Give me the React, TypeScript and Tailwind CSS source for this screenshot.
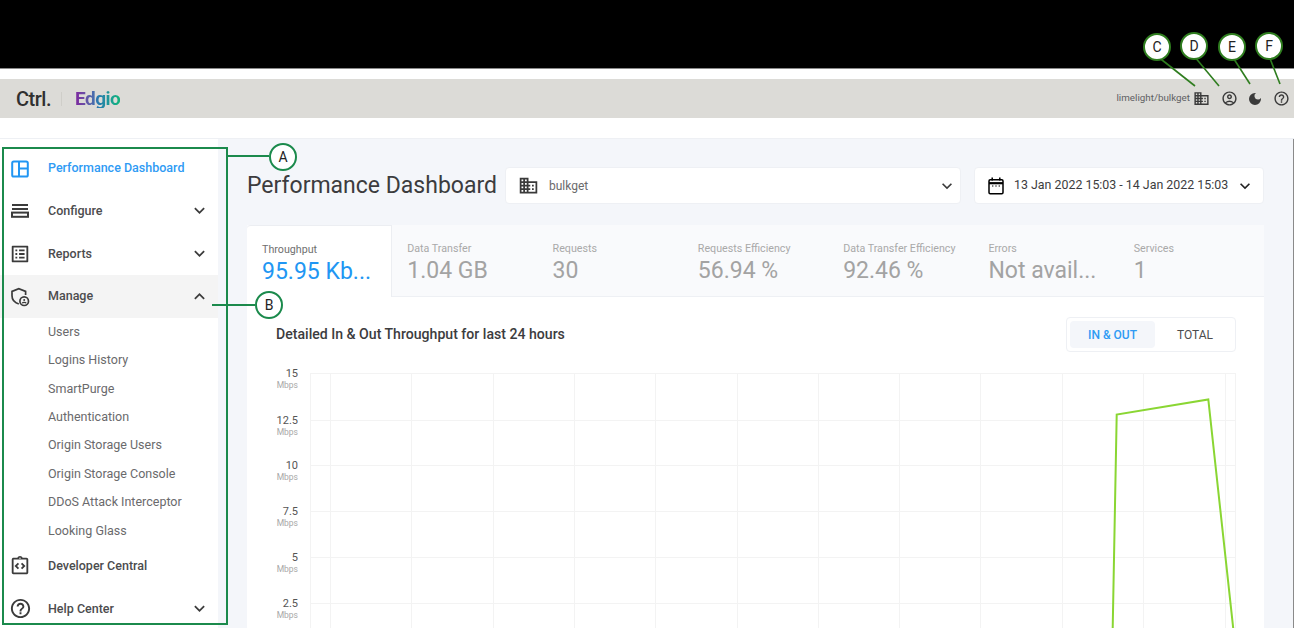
import { FC, ReactNode } from "react";
import {
  MdDomain,
  MdDarkMode,
  MdExpandLess,
  MdExpandMore,
  MdOutlineAccountCircle,
  MdOutlineHelpOutline,
  MdOutlineIntegrationInstructions,
  MdOutlineListAlt,
} from "react-icons/md";

type NavRowProps = {
  icon: ReactNode;
  label: string;
  active?: boolean;
  open?: boolean;
  hasChevron?: boolean;
};

type StatTabProps = {
  label: string;
  value: string;
  active?: boolean;
};

type BadgeProps = {
  letter: string;
  className: string;
};

const subItems = [
  "Users",
  "Logins History",
  "SmartPurge",
  "Authentication",
  "Origin Storage Users",
  "Origin Storage Console",
  "DDoS Attack Interceptor",
  "Looking Glass",
];

const stats = [
  { label: "Throughput", value: "95.95 Kb...", active: true },
  { label: "Data Transfer", value: "1.04 GB" },
  { label: "Requests", value: "30" },
  { label: "Requests Efficiency", value: "56.94 %" },
  { label: "Data Transfer Efficiency", value: "92.46 %" },
  { label: "Errors", value: "Not avail..." },
  { label: "Services", value: "1" },
];

const yTicks = [
  { y: 373, label: "15" },
  { y: 420, label: "12.5" },
  { y: 465, label: "10" },
  { y: 511, label: "7.5" },
  { y: 557, label: "5" },
  { y: 603, label: "2.5" },
];

const xTicks = [330.5, 411.5, 493.5, 574.5, 655.5, 737.5, 818.5, 899.5, 980.5, 1062.5, 1143.5, 1225.5];

const DashboardIcon = () => (
  <svg width="18" height="18" viewBox="0 0 18 18" fill="none" stroke="currentColor" strokeWidth="2" className="shrink-0">
    <rect x="1.2" y="1.4" width="15.6" height="15.2" rx="1.6" />
    <path d="M8 1.4v15.2M8 8.4h8.8" />
  </svg>
);

const ConfigureIcon = () => (
  <svg width="18" height="14" viewBox="0 0 18 14" fill="none" stroke="currentColor" strokeWidth="2" className="shrink-0">
    <path d="M1 1h16M1 5h16" />
    <rect x="1" y="8.6" width="16" height="4.2" />
  </svg>
);

const ManageIcon = () => (
  <svg width="20" height="20" viewBox="0 0 20 20" fill="none" stroke="currentColor" strokeWidth="1.7" className="shrink-0">
    <path d="M15.6 8V4.4L8.8 1.6 2 4.4v4.4c0 4 2.8 7 6.8 8.2" />
    <circle cx="14.2" cy="14.2" r="4.3" />
    <circle cx="14.2" cy="13" r="1" fill="currentColor" stroke="none" />
    <path d="M12.2 16.2c.6-1.2 3.4-1.2 4 0" strokeWidth="1.2" />
  </svg>
);

const CalendarIcon = () => (
  <svg width="16" height="18" viewBox="0 0 16 18" fill="none" stroke="currentColor" strokeWidth="1.5" className="shrink-0">
    <rect x="1" y="2.8" width="14" height="14" rx="1.2" />
    <path d="M4.2 0.6v3M11.8 0.6v3" />
    <path d="M1 6.2h14" strokeWidth="2.2" />
    <path d="M4 9h1.4M7.3 9h1.4M10.6 9H12" strokeWidth="1" />
  </svg>
);

const NavRow: FC<NavRowProps> = ({ icon, label, active, open, hasChevron }) => (
  <div
    className={`flex h-[43px] items-center pl-[11px] pr-[8px] ${open ? "bg-[#f4f4f4]" : ""} ${active ? "pt-[2px]" : ""}`}
  >
    <span
      className={`flex w-[18px] justify-center ${active ? "text-[#2196f3]" : "text-[#3b3b3b]"}`}
    >
      {icon}
    </span>
    <span
      className={`ml-[19px] flex-1 text-[12.5px] font-medium ${active ? "text-[#2f9bf4]" : "text-[#4c4c4e]"} ${active || open ? "" : "pt-[2px]"}`}
    >
      {label}
    </span>
    {hasChevron &&
      (open ? (
        <MdExpandLess className="shrink-0 text-[21px] text-[#3b3b3b]" />
      ) : (
        <MdExpandMore className="shrink-0 text-[21px] text-[#3b3b3b]" />
      ))}
  </div>
);

const StatTab: FC<StatTabProps> = ({ label, value, active }) => (
  <div
    className={`h-[72px] w-[145.3px] pl-[15px] pt-[17px] ${
      active
        ? "rounded-tl-sm border-r border-t border-[#eceef2] bg-white"
        : "border-b border-[#eef0f4]"
    }`}
  >
    <p className={`text-[10.7px] leading-[13px] ${active ? "text-[#6f6f6f]" : "text-[#a9a9a9]"}`}>{label}</p>
    <p
      className={`mt-[1px] text-[23px] leading-[29px] ${active ? "text-[#2196f3]" : "text-[#a3a3a3]"}`}
    >
      {value}
    </p>
  </div>
);

const Badge: FC<BadgeProps> = ({ letter, className }) => (
  <div
    className={`absolute flex h-[28px] w-[28px] items-center justify-center rounded-full border-2 border-[#1b8a4c] bg-white text-[14px] text-[#222] ${className}`}
  >
    {letter}
  </div>
);

const Chart: FC = () => (
  <svg width="1000" height="270" viewBox="247 358 1000 270" className="block">
    {yTicks.map((tick) => (
      <g key={tick.label}>
        <line x1="310" x2="1236" y1={tick.y + 0.5} y2={tick.y + 0.5} stroke="#f3f3f3" />
        <text x="298" y={tick.y + 4} textAnchor="end" fontSize="11" fill="#555">
          {tick.label}
        </text>
        <text x="298" y={tick.y + 15} textAnchor="end" fontSize="8.5" fill="#a8a8a8">
          Mbps
        </text>
      </g>
    ))}
    <line x1="310.5" x2="310.5" y1="373" y2="628" stroke="#f3f3f3" />
    <line x1="1235.5" x2="1235.5" y1="373" y2="628" stroke="#f3f3f3" />
    {xTicks.map((x) => (
      <line key={x} x1={x} x2={x} y1="373" y2="628" stroke="#f3f3f3" />
    ))}
    <polyline
      points="1112.7,628 1116.7,414.5 1208.3,399.5 1233.2,628"
      fill="none"
      stroke="#8ad633"
      strokeWidth="2"
    />
  </svg>
);

export default function App() {
  return (
    <div className="relative h-[628px] w-[1294px] overflow-hidden bg-white font-['Roboto',sans-serif]">
      <div className="h-[69px] border-b border-[#8a8a8a] bg-black" />

      <div className="h-[10px]" />

      {/* Top bar */}
      <header className="flex h-[39px] items-center bg-[#dcdbd7] pl-[16px] pr-[4px]">
        <span className="text-[20px] font-medium leading-none tracking-[-0.5px] text-[#303030]">Ctrl.</span>
        <span className="ml-[10px] h-[14px] w-px bg-[#cfcec9]" />
        <span className="ml-[13px] bg-gradient-to-r from-[#7d1f9e] via-[#2b78b0] to-[#10b57a] bg-clip-text text-[19px] font-bold leading-none tracking-[-0.5px] text-transparent">
          Edgio
        </span>
        <div className="ml-auto flex items-center text-[#3a3a3a]">
          <span className="text-[9.8px] text-[#5f5f63]">limelight/bulkget</span>
          <MdDomain className="ml-[3px] shrink-0 text-[17px]" />
          <MdOutlineAccountCircle className="ml-[11px] shrink-0 text-[17px]" />
          <MdDarkMode className="ml-[9px] shrink-0 text-[16px]" />
          <MdOutlineHelpOutline className="ml-[10px] shrink-0 text-[17px]" />
        </div>
      </header>

      <div className="h-[21px] border-b border-[#eef0f4]" />

      <div className="flex h-[489px] border-r border-[#8a8a8a]">
        {/* Sidebar */}
        <aside className="w-[218px] shrink-0 bg-white pt-[7px]">
          <NavRow icon={<DashboardIcon />} label="Performance Dashboard" active />
          <NavRow icon={<ConfigureIcon />} label="Configure" hasChevron />
          <NavRow icon={<MdOutlineListAlt className="shrink-0 text-[22px]" />} label="Reports" hasChevron />
          <NavRow icon={<ManageIcon />} label="Manage" open hasChevron />
          <ul className="mb-[-1px]">
            {subItems.map((item) => (
              <li key={item} className="flex h-[28.4px] items-center pl-[48px] text-[12.5px] text-[#6a6a6c]">
                {item}
              </li>
            ))}
          </ul>
          <NavRow
            icon={<MdOutlineIntegrationInstructions className="shrink-0 text-[22px]" />}
            label="Developer Central"
          />
          <NavRow icon={<MdOutlineHelpOutline className="shrink-0 text-[23px]" />} label="Help Center" hasChevron />
        </aside>

        {/* Main */}
        <main className="min-w-0 flex-1 bg-[#f4f6fa] pl-[29px] pr-[29px]">
          <div className="flex h-[86px] items-start pt-[28px]">
            <h1 className="w-[258px] shrink-0 whitespace-nowrap pt-[3px] text-[23px] leading-[32px] text-[#3c3c3e]">
              Performance Dashboard
            </h1>
            <div className="flex h-[37px] w-[456px] items-center rounded border border-[#eef0f4] bg-white pl-[12px] pr-[3px]">
              <MdDomain className="shrink-0 text-[21px] text-[#3a3a3a]" />
              <span className="ml-[10px] flex-1 text-[12px] text-[#6a6a6c]">bulkget</span>
              <MdExpandMore className="shrink-0 text-[20px] text-[#3a3a3a]" />
            </div>
            <div className="ml-[13px] flex h-[37px] w-[290px] items-center rounded border border-[#eef0f4] bg-white pl-[13px] pr-[8px]">
              <CalendarIcon />
              <span className="ml-[10px] flex-1 whitespace-nowrap text-[12.4px] text-[#3c3c3e]">
                13 Jan 2022 15:03 - 14 Jan 2022 15:03
              </span>
              <MdExpandMore className="shrink-0 text-[20px] text-[#222]" />
            </div>
          </div>

          {/* Stat tabs */}
          <div className="flex h-[72px] items-start bg-[#f9fafc]">
            {stats.map((stat) => (
              <StatTab key={stat.label} {...stat} />
            ))}
          </div>

          {/* Chart card */}
          <section className="h-[331px] bg-white">
            <div className="flex h-[61px] items-start pl-[29px] pr-[28px] pt-[20px]">
              <h2 className="flex-1 pt-[7px] text-[14.1px] font-medium leading-[20px] text-[#3c3c3e]">
                Detailed In &amp; Out Throughput for last 24 hours
              </h2>
              <div className="flex h-[35px] w-[170px] items-center rounded-sm border border-[#eef0f4] pl-[3px] text-[12px] font-medium">
                <span className="flex h-[27px] w-[85px] items-center justify-center rounded-sm bg-[#f4f6fa] text-[#2f9bf4]">
                  IN &amp; OUT
                </span>
                <span className="flex-1 text-center font-normal text-[#4c4c4e]">TOTAL</span>
              </div>
            </div>
            <Chart />
          </section>
        </main>
      </div>

      {/* Annotation callouts */}
      <div className="pointer-events-none absolute left-[2px] top-[147px] h-[478px] w-[226px] border-2 border-[#1b8a4c]" />
      <div className="absolute left-[228px] top-[155px] h-[2px] w-[41px] bg-[#1b8a4c]" />
      <Badge letter="A" className="left-[269px] top-[143px]" />
      <div className="absolute left-[212px] top-[304px] h-[2px] w-[43px] bg-[#1b8a4c]" />
      <Badge letter="B" className="left-[255px] top-[291px]" />

      <svg width="1294" height="100" className="absolute left-0 top-0">
        <line x1="1157" y1="56" x2="1195" y2="86" stroke="#2f7d1f" strokeWidth="1.6" />
        <line x1="1194" y1="56" x2="1219" y2="86" stroke="#2f7d1f" strokeWidth="1.6" />
        <line x1="1232" y1="56" x2="1250" y2="84" stroke="#2f7d1f" strokeWidth="1.6" />
        <line x1="1269" y1="56" x2="1280" y2="84" stroke="#2f7d1f" strokeWidth="1.6" />
      </svg>
      <Badge letter="C" className="left-[1143px] top-[33px] border-[#2f7d1f]" />
      <Badge letter="D" className="left-[1180px] top-[32px] border-[#2f7d1f]" />
      <Badge letter="E" className="left-[1218px] top-[33px] border-[#2f7d1f]" />
      <Badge letter="F" className="left-[1255px] top-[32px] border-[#2f7d1f]" />
    </div>
  );
}
